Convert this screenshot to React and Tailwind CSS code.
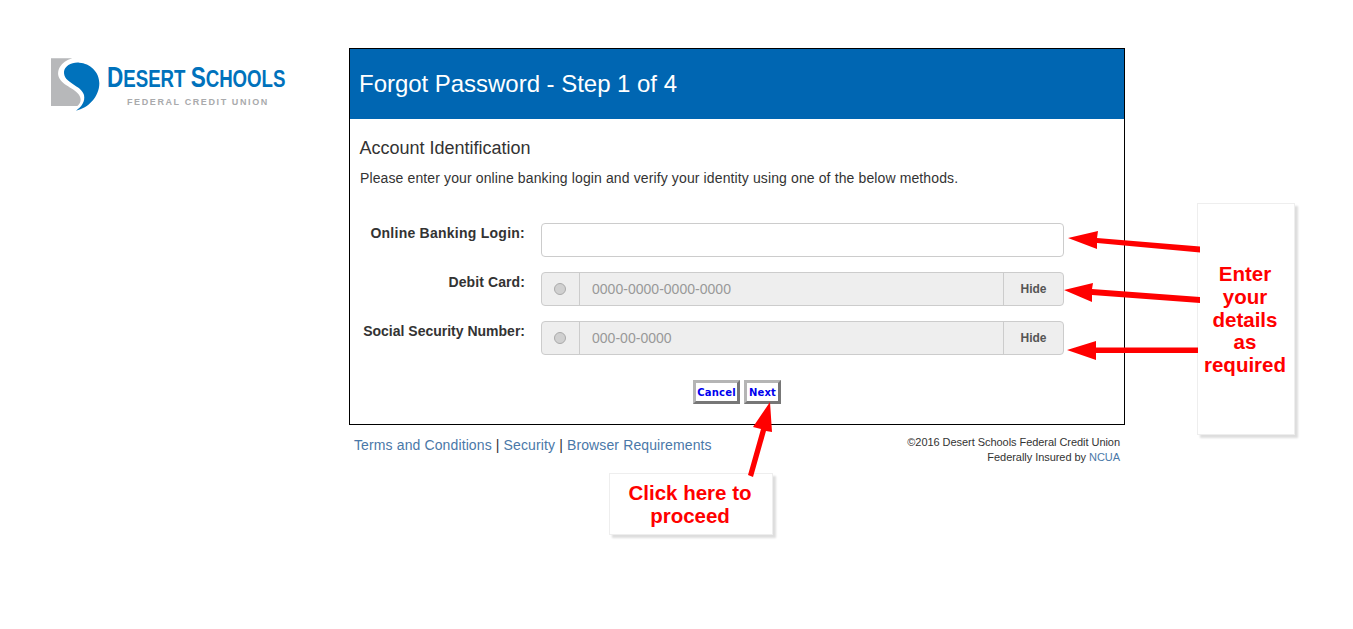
import React from "react";

const sans = "font-['Liberation_Sans',Arial,sans-serif]";

function Logo() {
  return (
    <div className="flex items-start">
      <svg width="50" height="54" viewBox="33 55 150 160" className="mt-[1px] shrink-0">
        <path d="M33 55H97C62 65 45 95 60 118C72 140 120 150 122 178C122 188 118 194 112 198H33Z" fill="#b7b8ba" />
        <path d="M118 68C150 70 178 95 178 130C178 170 145 205 108 212C125 200 136 185 132 165C125 135 70 130 72 95C74 78 95 66 118 68Z" fill="#0072bc" />
      </svg>
      <div className="ml-[6px] w-[178px] shrink-0 pt-[7px]">
        <div className="w-[250px] origin-left scale-x-[0.777] whitespace-nowrap font-['Liberation_Sans_Narrow','Liberation_Sans',sans-serif] leading-[26px] font-bold text-[#0072bc]">
          <span className="text-[29px]">D</span><span className="text-[24px]">ESERT </span>
          <span className="text-[29px]">S</span><span className="text-[24px]">CHOOLS</span>
        </div>
        <div className="mt-[2px] ml-[20px] whitespace-nowrap text-[9px] leading-[11px] font-bold tracking-[1.6px] text-[#a9aaac]">FEDERAL CREDIT UNION</div>
      </div>
    </div>
  );
}

function AddonRow({ label, placeholder, tracking }) {
  return (
    <div className="mb-[15px] flex">
      <label className={`w-[175px] shrink-0 text-right text-[14px] leading-[20px] font-bold text-[#333] ${tracking}`}>{label}</label>
      <div className="ml-[16px] flex h-[34px] w-[523px] rounded-[4px] border border-[#ccc] bg-[#eee]">
        <div className="flex w-[38px] shrink-0 items-center justify-center border-r border-[#ccc]">
          <input type="radio" disabled className="m-0 -ml-[1px] -mt-[1px] h-[12px] w-[12px] appearance-none rounded-full border border-[#aaa] bg-[#d0d0d0]" />
        </div>
        <input disabled placeholder={placeholder} className="min-w-0 flex-1 bg-transparent px-[12px] text-[14px] tracking-[0.02px] outline-none placeholder:text-[#999]" />
        <div className="flex w-[60px] shrink-0 items-center justify-center border-l border-[#ccc] text-[12px] font-bold text-[#555]">Hide</div>
      </div>
    </div>
  );
}

function Btn({ children, width }) {
  return (
    <button className={`h-[24px] border-[3px] border-solid border-t-[#b5b5b5] border-r-[#777] border-b-[#777] border-l-[#b5b5b5] bg-white px-0 font-['DejaVu_Sans',sans-serif] text-[10px] font-bold tracking-[0.2px] text-[#0000ee] ${width}`}>
      {children}
    </button>
  );
}

function Arrows() {
  return (
    <svg width="1353" height="629" className="pointer-events-none absolute top-0 left-0">
      <g fill="#ff0000" stroke="none">
        <path d="M1200 246.5L1097 238L1098 231L1068 238L1097 249L1097 243L1200 252.5Z" />
        <path d="M1200 297L1092 289L1093 283L1064 290L1092 302L1092 295L1200 303Z" />
        <path d="M1198 347.5H1096V341L1067 350L1096 360V353H1198Z" />
        <path d="M748 475L761 429L753 427L770 402L772 432L766 431L753 477Z" />
      </g>
    </svg>
  );
}

export default function App() {
  return (
    <div className={`relative h-[629px] overflow-hidden bg-white ${sans}`}>
      <div className="flex pt-[48px]">
        <div className="w-[349px] shrink-0 pt-[9px] pl-[51px]">
          <Logo />
        </div>
        <div className="w-[776px] shrink-0">
          <div className="border border-black">
            <div className="flex h-[70px] items-center bg-[#0066b2] pl-[9px] text-[24px] tracking-[-0.03px] text-white">Forgot Password - Step 1 of 4</div>
            <div className="h-[305px] pt-[19px]">
              <h2 className="pl-[9.5px] text-[18px] leading-[20px] text-[#333]">Account Identification</h2>
              <p className="mt-[10px] pl-[10px] text-[14px] leading-[20px] tracking-[0.12px] text-[#333]">Please enter your online banking login and verify your identity using one of the below methods.</p>
              <div className="mt-[35px]">
                <div className="mb-[15px] flex">
                  <label className="w-[175px] shrink-0 text-right text-[14px] leading-[20px] font-bold tracking-[0.25px] text-[#333]">Online Banking Login:</label>
                  <input className="ml-[16px] h-[34px] w-[523px] rounded-[4px] border border-[#ccc] bg-white px-[12px] text-[14px] outline-none" />
                </div>
                <AddonRow label="Debit Card:" placeholder="0000-0000-0000-0000" tracking="tracking-[0.1px]" />
                <AddonRow label="Social Security Number:" placeholder="000-00-0000" tracking="tracking-[0px]" />
              </div>
              <div className="mt-[25px] flex justify-center gap-[4px]">
                <Btn width="w-[47px]">Cancel</Btn>
                <Btn width="w-[37px]">Next</Btn>
              </div>
            </div>
          </div>
          <div className="flex justify-between pt-[10px] pr-[5px] pl-[5px]">
            <div className="text-[14px] leading-[20px] tracking-[0.12px] text-[#4a78a8]">
              <a>Terms and Conditions</a> <span className="text-[#333]">|</span> <a>Security</a> <span className="text-[#333]">|</span> <a>Browser Requirements</a>
            </div>
            <div className="text-right text-[11px] leading-[15px] tracking-[-0.05px] text-[#333]">
              <div>©2016 Desert Schools Federal Credit Union</div>
              <div>Federally Insured by <a className="text-[#4a78a8]">NCUA</a></div>
            </div>
          </div>
        </div>
      </div>

      {/* callouts */}
      <div className="absolute top-[203px] left-[1197px] h-[232px] w-[98px] border border-[#eee] bg-white pt-[59px] pr-[5px] pl-[3px] text-center text-[20.5px] leading-[22.8px] font-bold text-[#ff0000] shadow-[3px_3px_2px_#ddd]">
        Enter<br />your<br />details<br />as<br />required
      </div>
      <div className="absolute top-[473px] left-[609px] h-[62px] w-[164px] border border-[#eee] bg-white pt-[8px] pr-[2px] text-center text-[20.5px] leading-[22.8px] font-bold text-[#ff0000] shadow-[3px_3px_2px_#ddd]">
        Click here to<br />proceed
      </div>

      <Arrows />
    </div>
  );
}
